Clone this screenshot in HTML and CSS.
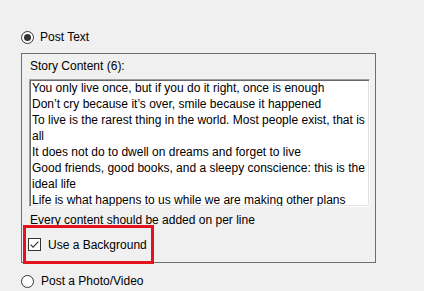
FILE: index.html
```html
<!DOCTYPE html>
<html lang="en">
  <head>
    <meta charset="UTF-8" />
    <title>Post Options</title>
    <link rel="stylesheet" href="styles.css">
  </head>
  <body>
    <div class="option">
      <svg class="radio" width="13" height="13" viewBox="0 0 13 13">
        <circle cx="6.5" cy="6.5" r="6" fill="#fff" stroke="#333" />
        <circle cx="6.5" cy="6.5" r="3.5" fill="#333" />
      </svg>
      <span>Post Text</span>
    </div>

    <!-- Text post panel -->
    <div class="panel">
      <div class="label">Story Content (6):</div>
      <div class="textbox">
        <div>You only live once, but if you do it right, once is enough</div>
        <div>Don’t cry because it’s over, smile because it happened</div>
        <div>To live is the rarest thing in the world. Most people exist, that is</div>
        <div>all</div>
        <div>It does not do to dwell on dreams and forget to live</div>
        <div>Good friends, good books, and a sleepy conscience: this is the</div>
        <div>ideal life</div>
        <div>Life is what happens to us while we are making other plans</div>
      </div>
      <div class="note">Every content should be added on per line</div>
      <div class="highlight">
        <svg class="check" width="13" height="13" viewBox="0 0 13 13">
          <rect x="0.5" y="0.5" width="12" height="12" fill="#fff" stroke="#333" />
          <path d="M2.6 6.6 L5.1 9.1 L10.4 3.6" fill="none" stroke="#333" stroke-width="1.2" />
        </svg>
        <span>Use a Background</span>
      </div>
    </div>

    <div class="option option-last">
      <svg class="radio" width="13" height="13" viewBox="0 0 13 13">
        <circle cx="6.5" cy="6.5" r="6" fill="#fff" stroke="#333" />
      </svg>
      <span>Post a Photo/Video</span>
    </div>
  </body>
</html>
```

FILE: styles.css
```css
body {
  margin: 0;
  padding: 29px 0 0 21px;
  background-color: #f0f0f0;
  font-family: "Liberation Sans", Arial, sans-serif;
  font-size: 12px;
  line-height: 16px;
  color: #000000;
  overflow: hidden;
}

.option {
  display: flex;
  align-items: center;
  height: 16px;
}

.option .radio {
  flex: none;
  margin-right: 6px;
}

.option-last {
  margin-top: 10px;
}

.option-last span {
  margin-left: 1px;
}

.panel {
  box-sizing: border-box;
  width: 355px;
  margin-top: 8px;
  padding: 4px 0 0 8px;
  border: 1px solid #6d6d6d;
}

.label {
  margin-bottom: 5px;
}

.textbox {
  box-sizing: border-box;
  width: 341px;
  height: 128px;
  margin-left: -1px;
  padding: 0 0 0 2px;
  background: #ffffff;
  border: 1px solid;
  border-color: #a0a0a0 #ffffff #ffffff #a0a0a0;
  box-shadow: inset 1px 1px 0 #696969, inset -1px -1px 0 #e3e3e3;
  white-space: nowrap;
  overflow: hidden;
}

.note {
  margin-top: 5px;
}

.highlight {
  position: relative;
  display: flex;
  align-items: center;
  box-sizing: border-box;
  width: 131px;
  height: 39px;
  margin: -3px 0 -2px -7px;
  padding-left: 2px;
  border: 3px solid #e3121d;
}

.highlight .check {
  flex: none;
  margin-right: 7px;
}
```
